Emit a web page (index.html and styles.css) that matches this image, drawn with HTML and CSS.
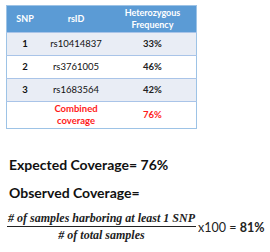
FILE: index.html
```html
<!DOCTYPE html>
<html>
<head>
<meta charset="utf-8">
<link rel="stylesheet" href="styles.css">
</head>
<body>
<div class="page">
  <table class="snp">
    <thead>
      <tr><th class="c1">SNP</th><th class="c2">rsID</th><th class="c3">Heterozygous<br>Frequency</th></tr>
    </thead>
    <tbody>
      <tr class="band"><td class="num">1</td><td>rs10414837</td><td class="pct">33%</td></tr>
      <tr><td class="num">2</td><td>rs3761005</td><td class="pct">46%</td></tr>
      <tr class="band"><td class="num">3</td><td>rs1683564</td><td class="pct">42%</td></tr>
      <tr class="total"><td></td><td class="red">Combined<br>coverage</td><td class="red pct">76%</td></tr>
    </tbody>
  </table>
  <p class="line expected">Expected Coverage= 76%</p>
  <p class="line observed">Observed Coverage=</p>
  <div class="formula">
    <div class="frac">
      <span class="numer"># of samples harboring at least 1 SNP</span>
      <span class="denom"># of total samples</span>
    </div>
    <span class="mult">x100 = <b>81%</b></span>
  </div>
</div>
</body>
</html>
```
FILE: styles.css
```css
html, body { margin: 0; padding: 0; background: #fff; }
.page { width: 270px; height: 252px; padding: 5px 0 0 6px; box-sizing: border-box; font-family: Lato, "Open Sans", sans-serif; color: #111; }
.snp { border-collapse: collapse; width: 191px; border: 1px solid #9dc3e6; font-size: 9.5px; }
.snp th { background: #5b9bd5; color: #fff; font-weight: 700; height: 26px; padding: 0; line-height: 12px; font-size: 9px; }
.c1 { width: 36px; }
.c2 { width: 66px; }
.snp td { height: 22px; padding: 0; text-align: center; border-top: 1px solid #a9c4e8; line-height: 12px; }
.snp tr.band td { background: #e9edf5; }
.snp tr.total td { height: 26px; }
.num { font-weight: 700; }
.pct { font-weight: 700; color: #222; }
.red { color: #ff1a1a; font-weight: 700; }
.snp td.red.pct { color: #ff1a1a; }
.line { margin: 0; font-weight: 700; font-size: 14px; color: #111; line-height: 17px; padding-left: 3px; }
.expected { margin-top: 27px; }
.observed { margin-top: 11px; }
.formula { display: flex; align-items: center; margin-top: 10px; padding-left: 1px; }
.frac { display: flex; flex-direction: column; align-items: center; font-family: "Liberation Serif", serif; font-style: italic; font-weight: 700; font-size: 12px; color: #222; }
.numer { border-bottom: 1px solid #222; line-height: 14px; padding: 0 1px 1px; }
.denom { line-height: 14px; padding-top: 1px; }
.mult { font-size: 12.5px; color: #222; margin-left: 2px; padding-top: 2px; }
.mult b { font-weight: 700; }
```
